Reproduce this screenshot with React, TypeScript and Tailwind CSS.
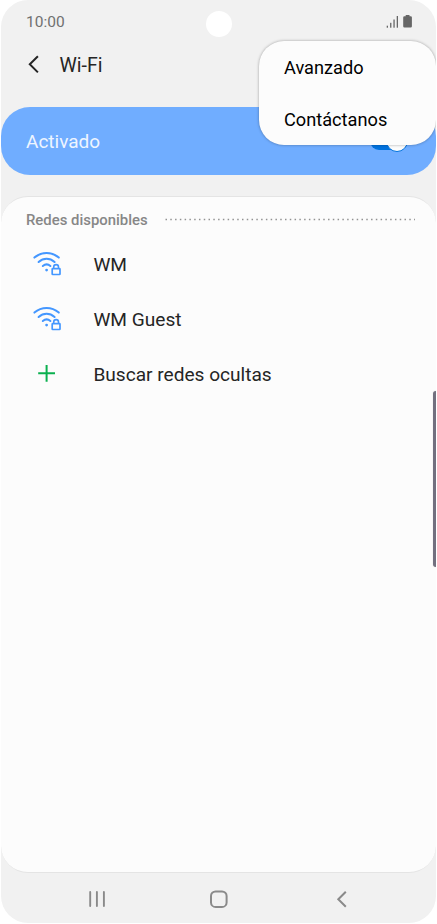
import type { ReactNode } from "react";

const networks = ["WM", "WM Guest"];

function WifiLockIcon() {
  return (
    <svg width="30" height="28" viewBox="0 0 30 28" fill="none" stroke="#4497ff" strokeWidth="2" strokeLinecap="round">
      <path d="M2.4 7.6C9.6 1.3 19.6 1.3 26.8 7.6" />
      <path d="M6.6 12C11.4 7.7 17.8 7.7 22.6 12" />
      <path d="M10.8 16C13.2 14 16.1 14 18.4 16" />
      <circle cx="14.6" cy="20.1" r="1.4" fill="#4497ff" stroke="none" />
      <rect x="20.2" y="18.6" width="7.8" height="5.9" rx="0.6" strokeWidth="1.7" />
      <path d="M21.7 18.3V17a2.4 2.4 0 0 1 4.8 0V18.3" strokeWidth="1.6" />
    </svg>
  );
}

function PlusIcon() {
  return (
    <svg width="30" height="28" viewBox="0 0 30 28" fill="none" stroke="#0bb04f" strokeWidth="2">
      <path d="M6.2 13.3h16.8M14.6 4.9v16.8" />
    </svg>
  );
}

function StatusIcons() {
  return (
    <svg width="28" height="16" viewBox="0 0 28 16" fill="#666666">
      <rect x="0.7" y="11.7" width="1.3" height="2" />
      <rect x="4.1" y="8.8" width="1.3" height="4.9" />
      <rect x="7.4" y="5.5" width="1.3" height="8.2" />
      <rect x="10.7" y="2" width="1.3" height="11.7" />
      <path d="M19.7 1h3.8v1.2h1.2q1.2 0 1.2 1.2v8.9q0 1.2-1.2 1.2h-6.3q-1.2 0-1.2-1.2V3.4q0-1.2 1.2-1.2h1.3z" />
    </svg>
  );
}

function Row({ icon, label }: { icon: ReactNode; label: string }) {
  return (
    <div className="flex h-[55px] items-center pl-[31px]">
      {icon}
      <span className="ml-[31.4px] pt-[3px] text-[19.1px] text-[#252525]">{label}</span>
    </div>
  );
}

export default function App() {
  return (
    <div className="h-[924px] w-[437px] overflow-hidden bg-white px-px font-['Roboto',sans-serif]">
      <div className="relative flex h-[923px] flex-col overflow-hidden rounded-[27px] bg-[#f1f1f1]">
        {/* Status bar */}
        <div className="flex h-[43px] shrink-0 items-center justify-between pr-[22px] pl-[25px]">
          <span className="pt-0.5 text-[15.5px] text-[#707070]">10:00</span>
          <StatusIcons />
        </div>

        {/* Camera cutout */}
        <div className="absolute top-[11px] left-[204.5px] size-[26px] rounded-full bg-white" />

        {/* Title */}
        <div className="flex h-11 shrink-0 items-center pl-[26px]">
          <svg width="14" height="20" viewBox="0 0 14 20" fill="none" stroke="#252525" strokeWidth="2">
            <path d="M10.9 1.2L2.8 9.3l8.1 8.1" />
          </svg>
          <h1 className="ml-[18.5px] pt-0.5 text-[19.5px] text-[#252525]">Wi-Fi</h1>
        </div>

        {/* Wi-Fi switch */}
        <div className="mt-5 flex h-[68px] shrink-0 items-center justify-between rounded-[29px] bg-[#70adff] pr-[28px] pl-[25px]">
          <span className="pt-0.5 text-[19px] text-[#eef5ff]">Activado</span>
          <div className="flex h-[18px] w-[38px] items-center justify-end rounded-full bg-[#0072de]">
            <div className="size-[22px] shrink-0 rounded-full border border-[#0072de] bg-[#fcfcfc]" />
          </div>
        </div>

        {/* Available networks */}
        <div className="mt-[21px] h-[677px] shrink-0 rounded-[27px] border-y border-[#e4e4e4] bg-[#fcfcfc]">
          <div className="flex h-[39px] items-center pt-[7px] pl-[25px]">
            <h2 className="w-[139px] text-[14.9px] font-medium text-[#878787]">Redes disponibles</h2>
            <svg width="252" height="4" viewBox="0 0 252 4">
              <path d="M0.5 1.5h249.5" stroke="#929292" strokeWidth="1.5" strokeDasharray="1.5 3.28" />
            </svg>
          </div>
          {networks.map((name) => (
            <Row key={name} icon={<WifiLockIcon />} label={name} />
          ))}
          <Row icon={<PlusIcon />} label="Buscar redes ocultas" />
        </div>

        {/* Navigation bar */}
        <div className="flex h-[50px] shrink-0 items-center justify-between pr-[87px] pb-px pl-[87px] pt-[3px]">
          <svg width="18" height="18" viewBox="0 0 18 18" stroke="#8a8a8a" strokeWidth="1.9" strokeLinecap="round">
            <path d="M2.2 2v14M8.9 2v14M15.9 2v14" />
          </svg>
          <svg className="-ml-[3px]" width="18" height="18" viewBox="0 0 18 18" fill="none" stroke="#8a8a8a" strokeWidth="2">
            <rect x="1" y="1.4" width="15.6" height="15.6" rx="4.6" />
          </svg>
          <svg width="14" height="18" viewBox="0 0 14 18" fill="none" stroke="#8a8a8a" strokeWidth="2">
            <path d="M10.8 1.7L3.3 9.2l7.5 7.5" />
          </svg>
        </div>

        {/* Edge panel handle */}
        <div className="absolute top-[391px] right-0 h-[176px] w-[3px] rounded-l-[3px] bg-[#72707f] shadow-[0_0_1px_#8888]" />

        {/* Overflow menu */}
        <div className="absolute top-[41px] right-0 h-[104px] w-[177px] rounded-[25px] bg-[#fcfcfc] pt-px pl-[25px] text-[18.2px] text-black shadow-[0_0_3px_rgba(0,0,0,0.35)]">
          <div className="flex h-[52px] items-center">Avanzado</div>
          <div className="flex h-[52px] items-center">Contáctanos</div>
        </div>
      </div>
    </div>
  );
}
